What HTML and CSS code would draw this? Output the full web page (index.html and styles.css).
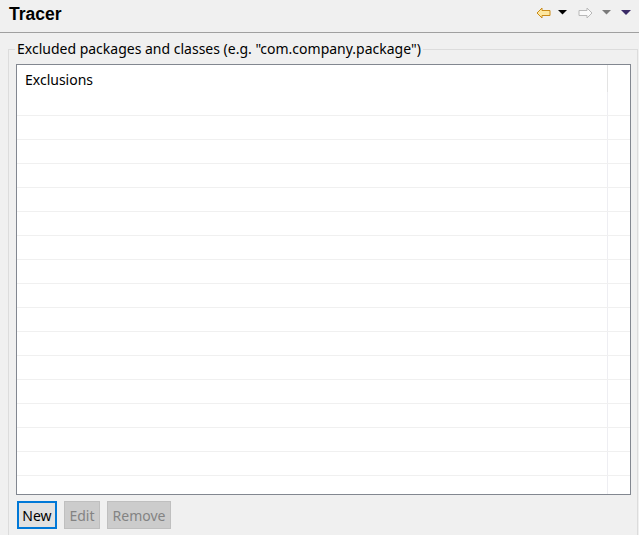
FILE: index.html
```html
<!DOCTYPE html>
<html>
<head>
<meta charset="utf-8">
<link rel="stylesheet" href="styles.css">
</head>
<body>
<div class="titlebar">
  <span class="title">Tracer</span>
  <div class="tools">
    <svg class="arrow back" width="15" height="12" viewBox="0 0 15 12"><path d="M1 6 L6 1 L6 3.5 L14 3.5 L14 8.5 L6 8.5 L6 11 Z" fill="#fde7a0" stroke="#c98a18" stroke-width="1" stroke-linejoin="miter"/></svg>
    <svg class="tri t1" width="9" height="5" viewBox="0 0 9 5"><path d="M0 0 H9 L4.5 4.5 Z" fill="#000"/></svg>
    <svg class="arrow fwd" width="15" height="12" viewBox="0 0 15 12"><path d="M14 6 L9 1 L9 3.5 L1 3.5 L1 8.5 L9 8.5 L9 11 Z" fill="#fafafa" stroke="#b8b8b8" stroke-width="1"/></svg>
    <svg class="tri t2" width="9" height="5" viewBox="0 0 9 5"><path d="M0 0 H9 L4.5 4.5 Z" fill="#7a7a7a"/></svg>
    <svg class="tri t3" width="10" height="5" viewBox="0 0 10 5"><path d="M0 0 H10 L5 5 Z" fill="#3a2a66"/></svg>
  </div>
</div>
<fieldset class="group">
  <legend class="group-label">Excluded packages and classes (e.g. "com.company.package")</legend>
  <div class="table">
    <div class="row head"><div class="cell">Exclusions</div><div class="cell filler"></div></div>
    <div class="row"><div class="cell"></div><div class="cell filler"></div></div>
    <div class="row"><div class="cell"></div><div class="cell filler"></div></div>
    <div class="row"><div class="cell"></div><div class="cell filler"></div></div>
    <div class="row"><div class="cell"></div><div class="cell filler"></div></div>
    <div class="row"><div class="cell"></div><div class="cell filler"></div></div>
    <div class="row"><div class="cell"></div><div class="cell filler"></div></div>
    <div class="row"><div class="cell"></div><div class="cell filler"></div></div>
    <div class="row"><div class="cell"></div><div class="cell filler"></div></div>
    <div class="row"><div class="cell"></div><div class="cell filler"></div></div>
    <div class="row"><div class="cell"></div><div class="cell filler"></div></div>
    <div class="row"><div class="cell"></div><div class="cell filler"></div></div>
    <div class="row"><div class="cell"></div><div class="cell filler"></div></div>
    <div class="row"><div class="cell"></div><div class="cell filler"></div></div>
    <div class="row"><div class="cell"></div><div class="cell filler"></div></div>
    <div class="row"><div class="cell"></div><div class="cell filler"></div></div>
    <div class="row"><div class="cell"></div><div class="cell filler"></div></div>
    <div class="row"><div class="cell"></div><div class="cell filler"></div></div>
  </div>
  <div class="buttons">
    <button class="btn primary">New</button>
    <button class="btn disabled">Edit</button>
    <button class="btn disabled">Remove</button>
  </div>
</fieldset>
</body>
</html>
```
FILE: styles.css
```css
html, body {
  margin: 0;
  padding: 0;
  background: #f0f0f0;
  overflow: hidden;
}
body {
  font-family: "Noto Sans", "Open Sans", sans-serif;
  font-size: 14px;
  color: #000;
  width: 639px;
  height: 535px;
}
.titlebar {
  height: 32px;
  border-bottom: 1px solid #a0a0a0;
  display: flex;
  align-items: center;
  justify-content: space-between;
  padding: 0 8px 0 9px;
}
.title {
  font-family: "Liberation Sans", Arial, sans-serif;
  font-weight: bold;
  font-size: 17.5px;
  margin-top: -4px;
}
.tools {
  display: flex;
  align-items: center;
  margin-top: -7px;
}
.tools svg { display: block; }
.back { margin-right: 7px; }
.t1 { margin-right: 11px; }
.fwd { margin-right: 9px; }
.t2 { margin-right: 10px; }
.group {
  margin: 8px 1px 0 8px;
  padding: 0 6px 0 7px;
  border: 1px solid #dcdcdc;
  border-bottom: none;
  height: 494px;
  box-sizing: border-box;
}
.group-label {
  padding: 0 2px;
  margin-left: -1px;
  line-height: 16px;
  color: #000;
}
.table {
  margin-top: 7px;
  height: 429px;
  border: 1px solid #828790;
  background: #fff;
  overflow: hidden;
}
.row {
  display: flex;
  height: 24px;
  box-sizing: border-box;
  border-bottom: 1px solid #f0f0f0;
}
.row.head {
  height: 27px;
  border-bottom: none;
}
.cell {
  width: 591px;
  flex: none;
  border-right: 1px solid #eeeef2;
  box-sizing: border-box;
  padding-left: 8px;
}
.row.head .cell {
  border-right-color: #e3e3e3;
  line-height: 28px;
  padding-top: 1px;
}
.cell.filler {
  width: auto;
  flex: 1;
  border-right: none;
}
.buttons {
  display: flex;
  gap: 7px;
  margin-top: 6px;
  padding-left: 1px;
}
.btn {
  font-family: inherit;
  font-size: 14px;
  height: 28px;
  padding: 0;
  margin: 0;
  box-sizing: border-box;
}
.btn.primary {
  background: #e1e1e1;
  border: 2px solid #0078d7;
  color: #000;
  width: 40px;
}
.btn.disabled {
  background: #cccccc;
  border: 1px solid #bfbfbf;
  color: #838383;
}
.btn.disabled:nth-child(2) { width: 36px; }
.btn.disabled:nth-child(3) { width: 64px; }
```
